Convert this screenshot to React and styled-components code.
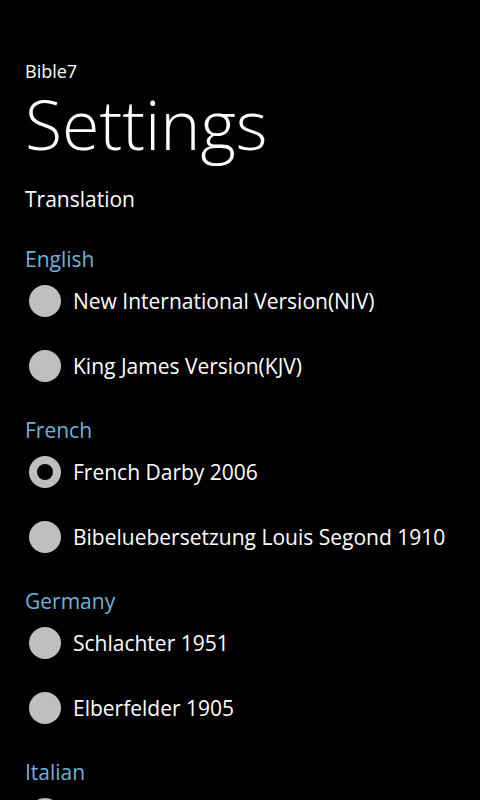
import React, { useState } from 'react'
import styled, { createGlobalStyle } from 'styled-components'

const GlobalStyle = createGlobalStyle`
  html, body {
    margin: 0;
    padding: 0;
    background: #000;
  }
  body {
    font-family: 'Open Sans', 'Noto Sans', sans-serif;
    color: #fff;
    overflow: hidden;
  }
`

const groups = [
  {
    name: 'English',
    items: [
      { id: 'niv', label: 'New International Version(NIV)' },
      { id: 'kjv', label: 'King James Version(KJV)' },
    ],
  },
  {
    name: 'French',
    items: [
      { id: 'darby', label: 'French Darby 2006' },
      { id: 'lsg', label: 'Bibeluebersetzung Louis Segond 1910' },
    ],
  },
  {
    name: 'Germany',
    items: [
      { id: 'sch', label: 'Schlachter 1951' },
      { id: 'elb', label: 'Elberfelder 1905' },
    ],
  },
  {
    name: 'Italian',
    items: [{ id: 'ita', label: 'Riveduta 1927' }],
  },
]

export default function App() {
  const [selected, setSelected] = useState('darby')

  return (
    <Page>
      <GlobalStyle />
      <AppName>Bible7</AppName>
      <Title>Settings</Title>
      <Section>Translation</Section>
      <Groups>
        {groups.map(group => (
          <Group key={group.name}>
            <GroupName>{group.name}</GroupName>
            <Options>
              {group.items.map(item => (
                <Option key={item.id} onClick={() => setSelected(item.id)}>
                  <Radio checked={selected === item.id} />
                  <OptionLabel>{item.label}</OptionLabel>
                </Option>
              ))}
            </Options>
          </Group>
        ))}
      </Groups>
    </Page>
  )
}

const Page = styled.div`
  height: 800px;
  overflow: hidden;
  padding: 59px 0 0 25px;
  box-sizing: border-box;
`

const AppName = styled.div`
  font-size: 18px;
  line-height: 24px;
`

const Title = styled.h1`
  margin: 1px 0 0;
  font-size: 68px;
  font-weight: 300;
  line-height: 80px;
`

const Section = styled.div`
  font-size: 21px;
  line-height: 30px;
  margin-top: 20px;
`

const Groups = styled.div`
  display: flex;
  flex-direction: column;
  gap: 22px;
  margin-top: 30px;
`

const Group = styled.div`
  display: flex;
  flex-direction: column;
`

const GroupName = styled.div`
  color: #6db3d9;
  font-size: 21px;
  line-height: 30px;
`

const Options = styled.div`
  display: flex;
  flex-direction: column;
  gap: 11px;
`

const Option = styled.div`
  display: flex;
  align-items: center;
  height: 54px;
  gap: 12px;
  margin-left: 4px;
  cursor: pointer;
`

const Radio = styled.span`
  width: 32px;
  height: 32px;
  border-radius: 50%;
  box-sizing: border-box;
  background: ${p => (p.checked ? 'transparent' : '#bfbfbf')};
  border: ${p => (p.checked ? '8px solid #bfbfbf' : 'none')};
  flex-shrink: 0;
`

const OptionLabel = styled.span`
  font-size: 21px;
  line-height: 30px;
  white-space: nowrap;
`
